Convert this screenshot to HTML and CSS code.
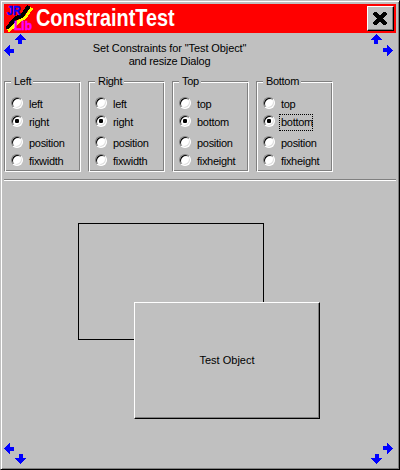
FILE: index.html
```
<!DOCTYPE html>
<html lang="en">
<head>
<meta charset="utf-8">
<title>ConstraintTest</title>
<link rel="stylesheet" href="styles.css">
</head>
<body>
<svg class="defs" width="0" height="0" aria-hidden="true">
  <symbol id="arrow" viewBox="0 0 11 10"><path d="M5 0h1v1h1v1h1v1h1v1h1v1h1v1H7v4H3V6H0V5h1V4h1V3h1V2h1V1h1z"/></symbol>
</svg>
<main class="window">
  <header class="titlebar">
    <svg class="app-icon" width="28" height="28" viewBox="0 0 28 28">
      <g fill="none" shape-rendering="crispEdges">
        <path d="M0 24L4 20L10 13L16 11L20 5L23 1" stroke="#000" stroke-width="4"/>
        <path d="M2 26L7 22L13 16L19 13L23 7L26 3" stroke="#ff0" stroke-width="3"/>
      </g>
      <text class="jr" x="1" y="10" textLength="14" lengthAdjust="spacingAndGlyphs">JR</text>
      <text class="lib" x="8" y="25" textLength="18" lengthAdjust="spacingAndGlyphs">Lib</text>
    </svg>
    <h1 class="title">ConstraintTest</h1>
    <button class="close" aria-label="Close">
      <svg width="14" height="13" viewBox="0 0 14 13" shape-rendering="crispEdges"><path d="M0 1h1V0h3v1h1v1h1v1h2V2h1V1h1V0h3v1h1v2h-1v1h-1v1h-1v1h-1v1h1v1h1v1h1v1h1v2h-1v1h-3v-1H9v-1H8v-1H6v1H5v1H4v1H1v-1H0v-2h1V9h1V8h1V7h1V6H3V5H2V4H1V3H0z"/></svg>
    </button>
  </header>

  <div class="corner tl"><svg class="arrow side-left"><use href="#arrow"/></svg><svg class="arrow up"><use href="#arrow"/></svg></div>
  <div class="corner tr"><svg class="arrow side-right"><use href="#arrow"/></svg><svg class="arrow up"><use href="#arrow"/></svg></div>
  <div class="corner bl"><svg class="arrow side-left"><use href="#arrow"/></svg><svg class="arrow down"><use href="#arrow"/></svg></div>
  <div class="corner br"><svg class="arrow side-right"><use href="#arrow"/></svg><svg class="arrow down"><use href="#arrow"/></svg></div>

  <p class="intro">Set Constraints for "Test Object"<br><span class="line-two">and resize Dialog</span></p>

  <section class="groups">
    <div class="group" role="radiogroup"><span class="legend">Left</span>
      <label class="option"><i class="radio"></i><span>left</span></label>
      <label class="option"><i class="radio on"></i><span>right</span></label>
      <label class="option spaced"><i class="radio"></i><span>position</span></label>
      <label class="option"><i class="radio"></i><span>fixwidth</span></label>
    </div>
    <div class="group" role="radiogroup"><span class="legend">Right</span>
      <label class="option"><i class="radio"></i><span>left</span></label>
      <label class="option"><i class="radio on"></i><span>right</span></label>
      <label class="option spaced"><i class="radio"></i><span>position</span></label>
      <label class="option"><i class="radio"></i><span>fixwidth</span></label>
    </div>
    <div class="group" role="radiogroup"><span class="legend">Top</span>
      <label class="option"><i class="radio"></i><span>top</span></label>
      <label class="option"><i class="radio on"></i><span>bottom</span></label>
      <label class="option spaced"><i class="radio"></i><span>position</span></label>
      <label class="option"><i class="radio"></i><span>fixheight</span></label>
    </div>
    <div class="group" role="radiogroup"><span class="legend">Bottom</span>
      <label class="option"><i class="radio"></i><span>top</span></label>
      <label class="option"><i class="radio on"></i><span class="focused">bottom</span></label>
      <label class="option spaced"><i class="radio"></i><span>position</span></label>
      <label class="option"><i class="radio"></i><span>fixheight</span></label>
    </div>
  </section>

  <section class="canvas">
    <div class="outline"></div>
    <button class="test-object">Test Object</button>
  </section>
</main>
</body>
</html>
```
FILE: styles.css
```
* { box-sizing: border-box; }
body {
  margin: 0;
  background: #c0c0c0;
  color: #000;
  font: 11px/13px "Liberation Sans", Arial, sans-serif;
}
.defs { position: absolute; }
.window {
  position: relative;
  display: flex;
  flex-direction: column;
  width: 400px;
  height: 470px;
  padding: 3px 3px 2px;
  border: 1px solid #c0c0c0;
  border-right-color: #000;
  border-bottom-color: #000;
  box-shadow: inset 1px 1px #fff, inset -1px -1px #808080;
  overflow: hidden;
}
.titlebar {
  display: flex;
  align-items: center;
  width: 392px;
  height: 29px;
  padding: 0 2px;
  background: #f00;
}
.app-icon { flex: none; }
.jr, .lib { font: bold 12.5px "Liberation Sans", sans-serif; stroke-width: .4px; }
.jr { fill: #00f; stroke: #00f; }
.lib { fill: #f0f; stroke: #f0f; }
.title {
  flex: 1;
  margin: 0 0 0 2px;
  color: #fff;
  font: bold 23.5px/29px "Liberation Sans", Arial, sans-serif;
  transform: scaleX(.845);
  transform-origin: left;
}
.close {
  display: flex;
  align-items: center;
  justify-content: center;
  width: 27px;
  height: 25px;
  padding: 0 1px 0 0;
  background: #c0c0c0;
  border: 1px solid #fff;
  border-right-color: #000;
  border-bottom-color: #000;
  box-shadow: inset -1px -1px #808080;
}
.corner {
  position: absolute;
  display: flex;
  width: 22px;
  height: 21px;
}
.tl { top: 33px; left: 3px; }
.tr { top: 33px; right: 6px; flex-direction: row-reverse; }
.bl { bottom: 5px; left: 3px; }
.br { bottom: 5px; right: 6px; flex-direction: row-reverse; }
.arrow {
  flex: none;
  width: 11px;
  height: 10px;
  fill: #00f;
  shape-rendering: crispEdges;
}
.down { align-self: flex-end; transform: rotate(180deg); }
.side-left { transform: translateY(.5px) translateX(-.5px) rotate(-90deg); }
.side-right { transform: translateY(.5px) translateX(.5px) rotate(90deg); }
.tl .side-left, .tr .side-right { align-self: flex-end; }
.intro {
  width: 331px;
  margin: 9px 0 0;
  text-align: center;
  letter-spacing: -.1px;
}
.line-two { letter-spacing: -.2px; }
.groups {
  display: flex;
  gap: 7px;
  margin-top: 13px;
}
.group {
  width: 77px;
  height: 91px;
  padding: 0 0 0 6px;
  border: 1px solid #808080;
  border-right-color: #fff;
  border-bottom-color: #fff;
  box-shadow: inset 1px 1px #fff, inset -1px -1px #808080;
}
.legend {
  display: block;
  width: max-content;
  height: 13px;
  margin: -7px 0 7px 0;
  padding: 0 2px 0 3px;
  background: #c0c0c0;
  letter-spacing: -.3px;
}
.option {
  display: flex;
  align-items: center;
  gap: 5px;
  height: 18px;
}
.option span { padding-left: 1px; letter-spacing: -.3px; }
.spaced { margin-top: 3px; }
.radio {
  flex: none;
  width: 12px;
  height: 12px;
  margin-bottom: 2px;
  border: 1px solid #808080;
  border-right-color: #fff;
  border-bottom-color: #fff;
  border-radius: 50%;
  background: #fff;
  box-shadow: inset 1px 1px #000, inset -1px -1px #dfdfdf;
}
.on { background: radial-gradient(circle at 5px 5px, #000 2px, #fff 2.4px); }
.option .focused {
  width: 32px;
  height: 15px;
  line-height: 14px;
  outline: 1px dotted #000;
}
.canvas {
  position: relative;
  flex: 1;
  width: 392px;
  margin-top: 7px;
  border-top: 1px solid #808080;
  box-shadow: inset 0 1px #fff;
}
.outline {
  position: absolute;
  left: 74px;
  top: 43px;
  width: 186px;
  height: 117px;
  border: 1px solid #000;
}
.test-object {
  position: absolute;
  left: 130px;
  top: 122px;
  width: 186px;
  height: 117px;
  padding: 0;
  background: #c0c0c0;
  border: 1px solid #fff;
  border-right-color: #000;
  border-bottom-color: #000;
  box-shadow: inset -1px -1px #808080;
  color: #000;
  font: inherit;
}
```
